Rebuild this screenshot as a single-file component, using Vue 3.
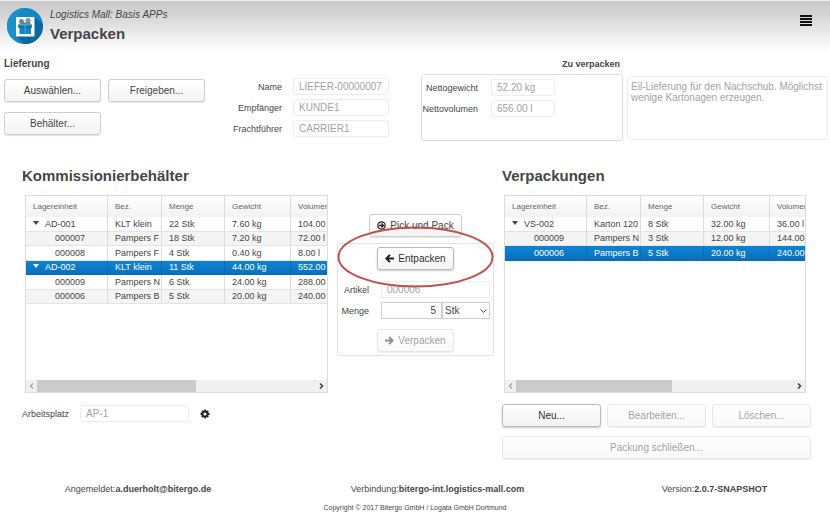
<script setup>
import { ref } from 'vue'

const menge = ref(5)
const einheit = ref('Stk')
const hinweis = ref('Eil-Lieferung für den Nachschub. Möglichst wenige Kartonagen erzeugen.')

const columns = ['Lagereinheit', 'Bez.', 'Menge', 'Gewicht', 'Volumen']

const sourceTable = {
  thumb: 57,
  rows: [
    { id: 'AD-001', parent: true, cells: ['KLT klein', '22 Stk', '7.60 kg', '104.00'] },
    { id: '000007', cells: ['Pampers F', '18 Stk', '7.20 kg', '72.00 l'] },
    { id: '000008', cells: ['Pampers F', '4 Stk', '0.40 kg', '8.00 l'] },
    { id: 'AD-002', parent: true, selected: true, cells: ['KLT klein', '11 Stk', '44.00 kg', '552.00'] },
    { id: '000009', cells: ['Pampers N', '6 Stk', '24.00 kg', '288.00'] },
    { id: '000006', cells: ['Pampers B', '5 Stk', '20.00 kg', '240.00'] },
  ],
}

const targetTable = {
  thumb: 56,
  rows: [
    { id: 'VS-002', parent: true, cells: ['Karton 120', '8 Stk', '32.00 kg', '36.00 l'] },
    { id: '000009', cells: ['Pampers N', '3 Stk', '12.00 kg', '144.00'] },
    { id: '000006', selected: true, cells: ['Pampers B', '5 Stk', '20.00 kg', '240.00'] },
  ],
}

const panels = [
  { key: 'source', title: 'Kommissionierbehälter', table: sourceTable },
  { key: 'target', title: 'Verpackungen', table: targetTable },
]
</script>

<template>
  <div class="page">
    <header class="header">
      <svg class="logo" viewBox="0 0 36 36" aria-hidden="true">
        <defs>
          <clipPath id="disc"><circle cx="18" cy="18" r="18" /></clipPath>
        </defs>
        <g clip-path="url(#disc)">
          <rect width="36" height="36" fill="#1187c4" />
          <path d="M27 9 36 16V36H17L9 28z" fill="#0b689f" />
          <path d="M0 0H18L9 9V28L4 33H0z" fill="#1a91cb" />
          <rect x="9" y="9" width="18.500" height="19.500" fill="#f4f7f8" />
          <circle cx="14.500" cy="13.500" r="2.400" fill="#74808a" />
          <circle cx="21" cy="12.500" r="2.600" fill="#8a949c" />
          <path d="M12 16.500 14 14H22.500L24.500 16.500z" fill="#74808a" />
          <path d="M17 12.500 18.500 15" stroke="#e8edf0" fill="none" />
          <path d="M11 16.500H25V19.500H24V26H12.500V19.500H11z" fill="#1384c0" />
          <path d="M12 19.500H24.500" stroke="#0b689f" />
          <path d="M18.200 16.500V26" stroke="#4ba5d4" />
        </g>
      </svg>
      <div class="titles">
        <p class="suite">Logistics Mall: Basis APPs</p>
        <h1 class="app-title">Verpacken</h1>
      </div>
      <button class="menu" type="button" aria-label="Menü">
        <svg viewBox="0 0 12 12" width="12" height="12">
          <path d="M0 1H12M0 4H12M0 7H12M0 10H12" stroke="#111" stroke-width="1.800" />
        </svg>
      </button>
    </header>

    <section class="delivery">
      <div>
        <h3 class="caption">Lieferung</h3>
        <div class="actions">
          <button class="btn" type="button">Auswählen...</button>
          <button class="btn" type="button">Freigeben...</button>
          <button class="btn" type="button">Behälter...</button>
        </div>
      </div>

      <div class="fields">
        <label for="name">Name</label>
        <input id="name" class="field" value="LIEFER-00000007" disabled />
        <label for="empf">Empfänger</label>
        <input id="empf" class="field" value="KUNDE1" disabled />
        <label for="fracht">Frachtführer</label>
        <input id="fracht" class="field" value="CARRIER1" disabled />
      </div>

      <div>
        <h3 class="caption caption-small">Zu verpacken</h3>
        <div class="totals">
          <label for="gewicht">Nettogewicht</label>
          <input id="gewicht" class="field" value="52.20 kg" disabled />
          <label for="volumen">Nettovolumen</label>
          <input id="volumen" class="field" value="656.00 l" disabled />
        </div>
      </div>

      <textarea v-model="hinweis" class="field note" aria-label="Hinweis" disabled></textarea>
    </section>

    <main class="work">
      <section v-for="p in panels" :key="p.key" :class="p.key">
        <h2 class="heading">{{ p.title }}</h2>
        <div class="grid">
          <div class="grid-body">
            <table>
              <colgroup>
                <col class="c-id" /><col class="c-bez" /><col class="c-menge" /><col class="c-gewicht" /><col />
              </colgroup>
              <thead>
                <tr><th v-for="c in columns" :key="c" scope="col">{{ c }}</th></tr>
              </thead>
              <tbody>
                <tr v-for="r in p.table.rows" :key="r.id" :class="{ selected: r.selected }">
                  <td :class="r.parent ? 'parent' : 'child'">
                    <svg v-if="r.parent" class="caret" viewBox="0 0 6 4" width="6" height="4"><path d="M0 0H6L3 4z" fill="currentColor" /></svg>{{ r.id }}
                  </td>
                  <td v-for="(c, i) in r.cells" :key="i">{{ c }}</td>
                </tr>
              </tbody>
            </table>
          </div>
          <div class="scroll">
            <svg viewBox="0 0 11 12" width="11" height="12"><path d="M7 3.500 4.500 6 7 8.500" fill="none" stroke="#a0a0a0" stroke-width="1.200" /></svg>
            <div class="track"><div class="thumb" :style="{ width: p.table.thumb + '%' }"></div></div>
            <svg viewBox="0 0 11 12" width="11" height="12"><path d="M4 3.500 6.500 6 4 8.500" fill="none" stroke="#444" stroke-width="1.600" /></svg>
          </div>
        </div>

        <div v-if="p.key === 'source'" class="station">
          <label for="platz">Arbeitsplatz</label>
          <input id="platz" class="field" value="AP-1" disabled />
          <button class="gear" type="button" aria-label="Einstellungen">
            <svg viewBox="0 0 10 10" width="10" height="10">
              <circle cx="5" cy="5" r="2.600" fill="none" stroke="#222" stroke-width="2" />
              <path d="M5 .5V2M5 8V9.500M.5 5H2M8 5H9.500M1.800 1.800 2.800 2.800M7.200 7.200 8.200 8.200M1.800 8.200 2.800 7.200M7.200 2.800 8.200 1.800" stroke="#222" stroke-width="1.800" />
            </svg>
          </button>
        </div>
        <div v-else class="pack-actions">
          <button class="btn focus" type="button">Neu...</button>
          <button class="btn" type="button" disabled>Bearbeiten...</button>
          <button class="btn" type="button" disabled>Löschen...</button>
          <button class="btn wide" type="button" disabled>Packung schließen...</button>
        </div>
      </section>

      <section class="transfer">
        <button class="btn pick" type="button">
          <svg viewBox="0 0 10 10" width="9" height="9">
            <circle cx="5" cy="5" r="4.100" fill="none" stroke="#222" stroke-width="1.400" />
            <path d="M2.200 5H7M5 2.800 7.200 5 5 7.200" fill="none" stroke="#222" stroke-width="1.400" />
          </svg>
          Pick und Pack
        </button>
        <div class="transfer-box">
          <button class="btn focus" type="button">
            <svg viewBox="0 0 10 10" width="9" height="9"><path d="M10 5H2M5.500 1 1.500 5 5.500 9" fill="none" stroke="#222" stroke-width="2.200" /></svg>
            Entpacken
          </button>
          <div class="entry">
            <label for="artikel">Artikel</label>
            <input id="artikel" class="field" value="000006" disabled />
            <label for="menge">Menge</label>
            <div class="amount">
              <input id="menge" v-model="menge" class="field active" />
              <div class="unit">
                <select v-model="einheit" class="field active" aria-label="Einheit">
                  <option>Stk</option>
                </select>
                <svg class="chevron" viewBox="0 0 7 4" width="7" height="4"><path d="M.5 .5 3.500 3.300 6.500 .5" fill="none" stroke="#444" /></svg>
              </div>
            </div>
          </div>
          <button class="btn" type="button" disabled>
            <svg viewBox="0 0 10 10" width="9" height="9"><path d="M0 5H8M4.500 1 8.500 5 4.500 9" fill="none" stroke="#222" stroke-width="2.200" /></svg>
            Verpacken
          </button>
          <svg class="marker" viewBox="0 0 158 62" preserveAspectRatio="none" aria-hidden="true">
            <ellipse cx="79" cy="31" rx="77.500" ry="29.500" fill="none" stroke="#c0504d" stroke-width="2" />
          </svg>
        </div>
      </section>
    </main>

    <footer>
      <div class="status">
        <span>Angemeldet:<b>a.duerholt@bitergo.de</b></span>
        <span>Verbindung:<b>bitergo-int.logistics-mall.com</b></span>
        <span>Version:<b>2.0.7-SNAPSHOT</b></span>
      </div>
      <p class="copyright">Copyright © 2017 Bitergo GmbH / Logata GmbH Dortmund</p>
    </footer>
  </div>
</template>

<style>
body {
  background: #fff;
}
</style>

<style scoped>
.page,
.page * {
  box-sizing: border-box;
}
.page {
  font-family: "Liberation Sans", Arial, sans-serif;
  font-size: 9px;
  line-height: 14px;
  color: #464646;
}
button,
input,
select,
textarea {
  font: inherit;
  color: inherit;
  margin: 0;
}
h1, h2, h3, p {
  margin: 0;
}

.header {
  display: flex;
  align-items: flex-start;
  height: 52px;
  padding: 7px 18px 0 7px;
  border-top: 1px solid #eee;
  background: linear-gradient(#c6c6c6, #fff);
}
.logo {
  width: 36px;
  height: 36px;
}
.titles {
  flex: 1;
  padding-left: 7px;
}
.suite {
  font-size: 10px;
  font-style: italic;
}
.app-title {
  font-size: 15px;
  line-height: 24px;
}
.menu,
.gear {
  display: flex;
  padding: 0;
  border: 0;
  background: none;
}
.menu {
  padding-top: 7px;
}

.btn {
  display: flex;
  align-items: center;
  justify-content: center;
  gap: 4px;
  height: 23px;
  padding: 0 4px;
  border: 1px solid #cfcfcf;
  border-radius: 3px;
  background: linear-gradient(#fff, #f3f3f3);
  box-shadow: 0 1px 1px #e4e4e4;
  font-size: 10px;
  white-space: nowrap;
}
.btn.focus {
  border-color: #bbb;
  box-shadow: 0 1px 2px #c8c8c8;
  color: #333;
}
.btn:disabled {
  opacity: 0.5;
}
.field {
  display: block;
  width: 100%;
  min-width: 0;
  height: 17px;
  padding: 0 5px;
  border: 1px solid #ececec;
  border-radius: 3px;
  background: #fff;
  color: #a3a3a3;
  font-size: 10px;
}
.field.active {
  border-color: #d0d0d0;
  border-radius: 0;
  color: #464646;
}

.delivery {
  display: grid;
  grid-template-columns: 201fr 216fr 202fr 205fr;
  padding: 5px 2px 0 4px;
}
.caption {
  font-size: 10px;
}
.caption-small {
  padding-right: 3px;
  font-size: 9px;
  text-align: right;
}
.actions {
  display: grid;
  grid-template-columns: 1fr 1fr;
  gap: 10px 7px;
  padding-top: 8px;
}
.fields {
  display: grid;
  grid-template-columns: 1fr 96px;
  gap: 4px 11px;
  align-content: start;
  align-items: center;
  padding: 21px 32px 0 0;
  text-align: right;
}
.totals {
  display: grid;
  grid-template-columns: 56px 64px;
  gap: 4px 13px;
  align-content: start;
  align-items: center;
  justify-content: start;
  height: 67px;
  margin-top: 3px;
  padding: 4px 0 0;
  border: 1px solid #ddd;
  border-radius: 3px;
  text-align: right;
}
.note {
  width: auto;
  height: 64px;
  margin: 19px 0 0 4px;
  padding: 4px 3px;
  line-height: 11px;
  resize: none;
  overflow: hidden;
}

.work {
  display: grid;
  grid-template-columns: 306fr 174fr 309fr;
  padding: 25px 19px 0 22px;
}
.transfer {
  grid-column: 2;
  grid-row: 1;
}
.target {
  grid-column: 3;
}
.source,
.target {
  min-width: 0;
}
.heading {
  font-size: 15px;
  line-height: 20px;
}
.grid {
  margin: 9px 0 0 3px;
  border: 1px solid #ddd;
}
.target .grid {
  margin: 9px 5px 0 2px;
}
.grid-body {
  height: 184px;
  overflow: hidden;
}
table {
  width: 100%;
  table-layout: fixed;
  border-collapse: separate;
  border-spacing: 0;
}
.c-id { width: 82px; }
.c-bez { width: 54px; }
.c-menge { width: 63px; }
.c-gewicht { width: 66px; }
th,
td {
  padding: 0 0 0 7px;
  overflow: hidden;
  text-align: left;
  white-space: nowrap;
  border-right: 1px solid #ddd;
}
th:last-child,
td:last-child {
  border-right: 0;
}
th {
  height: 21px;
  background: linear-gradient(#fff, #f2f2f2);
  font-size: 8px;
  font-weight: normal;
  color: #666;
}
td {
  height: 15px;
  font-size: 9px;
  line-height: 13px;
  border-bottom: 1px solid #e4e4e4;
}
tr:nth-child(even) td {
  height: 14px;
  background: #f4f4f4;
}
tr.selected td,
tr.selected:nth-child(even) td {
  background: linear-gradient(#0c84d4, #0a70bd);
  border-color: #0a68b4;
  color: #fff;
}
.caret {
  margin: 0 6px 2px 0;
}
.child {
  padding-left: 29px;
}
.scroll {
  display: flex;
  height: 12px;
  background: #f0f0f0;
}
.track {
  flex: 1;
}
.thumb {
  height: 100%;
  background: #cbcbcb;
}

.station {
  display: flex;
  align-items: center;
  gap: 11px;
  padding-top: 12px;
}
.station .field {
  width: 109px;
}
.pack-actions {
  display: grid;
  grid-template-columns: 1fr 1fr 1fr;
  gap: 9px 6px;
  padding-top: 11px;
}
.wide {
  grid-column: 1 / -1;
}

.transfer {
  padding: 48px 8px 0 9px;
}
.pick {
  width: 93px;
  margin: 0 auto 6px;
}
.transfer-box {
  position: relative;
  padding: 3px;
  border: 1px solid #e2e2e2;
  border-radius: 3px;
}
.transfer-box .btn {
  width: 77px;
  margin: 0 auto;
}
.entry {
  display: grid;
  grid-template-columns: 28px 1fr;
  gap: 4px 12px;
  align-items: center;
  padding: 11px 0 10px;
  text-align: right;
}
.amount {
  display: grid;
  grid-template-columns: 61px 1fr;
}
#menge {
  text-align: right;
}
.unit {
  position: relative;
}
.unit select {
  appearance: none;
  padding: 0 2px;
}
.chevron {
  position: absolute;
  right: 3px;
  top: 7px;
  pointer-events: none;
}
.marker {
  position: absolute;
  left: -1px;
  top: -18px;
  width: calc(100% + 2px);
  height: 62px;
  pointer-events: none;
}

.status {
  display: grid;
  grid-template-columns: 276fr 323fr 231fr;
  padding-top: 23px;
  text-align: center;
  font-size: 9px;
}
.copyright {
  padding-top: 5px;
  font-size: 7px;
  text-align: center;
}
</style>
